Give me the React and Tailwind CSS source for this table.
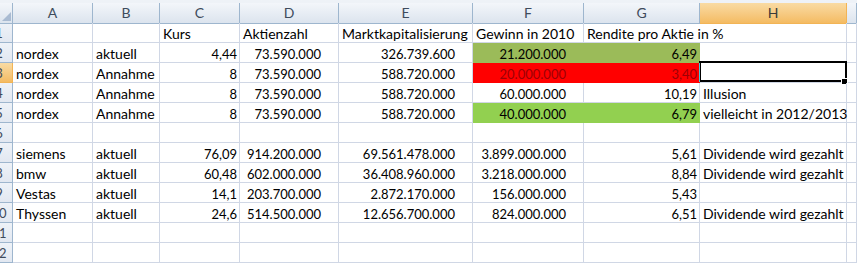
import React from 'react';

const cols = ['A', 'B', 'C', 'D', 'E', 'F', 'G', 'H', ''];

// each row: [A, B, C, D, E, F, G, H]
const rows = [
  ['', '', 'Kurs', 'Aktienzahl', 'Marktkapitalisierung', 'Gewinn in 2010', 'Rendite pro Aktie in %', ''],
  ['nordex', 'aktuell', '4,44', '73.590.000', '326.739.600', '21.200.000', '6,49', ''],
  ['nordex', 'Annahme', '8', '73.590.000', '588.720.000', '20.000.000', '3,40', ''],
  ['nordex', 'Annahme', '8', '73.590.000', '588.720.000', '60.000.000', '10,19', 'Illusion'],
  ['nordex', 'Annahme', '8', '73.590.000', '588.720.000', '40.000.000', '6,79', 'vielleicht in 2012/2013'],
  ['', '', '', '', '', '', '', ''],
  ['siemens', 'aktuell', '76,09', '914.200.000', '69.561.478.000', '3.899.000.000', '5,61', 'Dividende wird gezahlt'],
  ['bmw', 'aktuell', '60,48', '602.000.000', '36.408.960.000', '3.218.000.000', '8,84', 'Dividende wird gezahlt'],
  ['Vestas', 'aktuell', '14,1', '203.700.000', '2.872.170.000', '156.000.000', '5,43', ''],
  ['Thyssen', 'aktuell', '24,6', '514.500.000', '12.656.700.000', '824.000.000', '6,51', 'Dividende wird gezahlt'],
  ['', '', '', '', '', '', '', ''],
  ['', '', '', '', '', '', '', ''],
];

// fills keyed by "row-col"
const fills = {
  '1-5': 'bg-[#9bbb59] border-[#9bbb59]',
  '1-6': 'bg-[#9bbb59] border-[#9bbb59]',
  '2-5': 'bg-[#ff0000] border-[#ff0000] text-[#9c0006]',
  '2-6': 'bg-[#ff0000] border-[#ff0000] text-[#9c0006]',
  '4-5': 'bg-[#92d050] border-[#92d050]',
  '4-6': 'bg-[#92d050] border-[#92d050]',
};

function isNumber(v) {
  return /^[\d.,]+$/.test(v);
}

// D, E, F use a thousands format that leaves room on the right
function padFor(ci) {
  return ci >= 3 && ci <= 5
    ? 'justify-end pr-[17px] text-[13px]'
    : 'justify-end pr-[2px] text-[13px]';
}

export default function App() {
  return (
    <div className="w-[857px] h-[265px] overflow-hidden pt-[3px] bg-gradient-to-b from-[#eef2f7] to-white font-['Lato',sans-serif] text-[14px] text-black">
      <div className="grid grid-cols-[13px_80px_67px_80px_99px_134px_111px_116px_147px_1fr] auto-rows-[20px] bg-white leading-[14px]">
        {/* header row */}
        <div className="h-[21px] relative overflow-hidden border-r border-b border-[#9eb6ce] bg-gradient-to-b from-[#f3f6fa] to-[#dce4ee]">
          <div className="absolute right-[1px] bottom-[2px] w-0 h-0 border-l-[9px] border-l-transparent border-b-[9px] border-b-[#a9bbd2]" />
        </div>
        {cols.map((c, i) => (
          <div
            key={c + i}
            className={
              'h-[21px] flex items-center justify-center border-r border-b ' +
              (c === 'H'
                ? 'border-[#f2b455] bg-gradient-to-b from-[#f9dba3] to-[#f4bb62] text-[#3b3b3b]'
                : 'border-[#9eb6ce] bg-gradient-to-b from-[#f3f6fa] to-[#dce4ee] text-[#3e4b5c]')
            }
          >
            {c}
          </div>
        ))}

        {rows.map((r, ri) => (
          <React.Fragment key={ri}>
            <div
              className={
                'overflow-hidden flex items-end pb-[2px] border-r border-b text-[13px] ' +
                (ri === 2
                  ? 'border-[#f2b455] bg-gradient-to-b from-[#f9dba3] to-[#f4bb62]'
                  : 'border-[#9eb6ce] bg-gradient-to-b from-[#eef2f8] to-[#e2e8f1]')
              }
            >
              <div className="shrink-0 -ml-[13px] w-[24px] text-center text-[#3e4b5c]">{ri + 1}</div>
            </div>
            {r.map((v, ci) => {
              const fill = fills[ri + '-' + ci];
              const overflowCell = ri === 0 && ci === 6;
              const num = isNumber(v) && ri !== 0;
              return (
                <div
                  key={ci}
                  className={
                    'relative flex items-end pb-[1px] whitespace-nowrap border-b ' +
                    (overflowCell ? 'border-[#d0d7e5] ' : 'border-r ') +
                    (fill ? fill + ' ' : 'border-[#d0d7e5] ') +
                    (num ? padFor(ci) : 'pl-[3px]')
                  }
                >
                  <span className={overflowCell ? 'relative z-10' : ''}>{v}</span>
                  {ri === 2 && ci === 7 && (
                    <>
                      <div className="absolute -left-[1px] -top-[2px] w-[148px] h-[21px] border-2 border-black" />
                      <div className="absolute left-[-1px] top-0 w-px h-[19px] bg-[#47c7d6]" />
                      <div className="absolute right-[-2px] bottom-[-3px] w-[5px] h-[5px] bg-black border border-white box-content" />
                    </>
                  )}
                </div>
              );
            })}
            <div className="border-r border-b border-[#d0d7e5]" />
          </React.Fragment>
        ))}
      </div>
    </div>
  );
}
